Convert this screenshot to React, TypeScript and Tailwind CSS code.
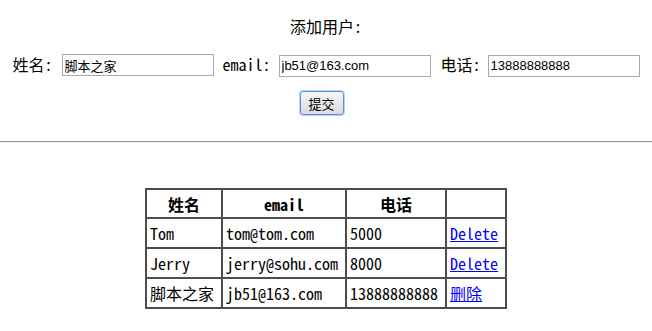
const cjk = "font-['SimSun','Noto_Sans_Mono_CJK_SC','Noto_Sans_CJK_SC',monospace]";

const rows = [
  { name: 'Tom', email: 'tom@tom.com', phone: '5000', action: 'Delete' },
  { name: 'Jerry', email: 'jerry@sohu.com', phone: '8000', action: 'Delete' },
  { name: '脚本之家', email: 'jb51@163.com', phone: '13888888888', action: '删除' },
];

function Field({ value }: { value: string }) {
  return (
    <input
      readOnly
      value={value}
      className="w-[152px] h-[22px] border border-[#a9a9a9] bg-white px-[2px] text-[13px] text-black font-['Liberation_Sans','Noto_Sans_CJK_SC',sans-serif] outline-none"
    />
  );
}

export default function App() {
  return (
    <div className={`min-h-[331px] bg-white text-black text-[16px] ${cjk}`}>
      <div className="pt-[14px] text-center">
        {/* form */}
        <p className="h-[24px] leading-[24px]">添加用户:</p>
        <div className="mt-[15px] flex items-center justify-center h-[22px]">
          <span className="w-[48px] text-left">姓名:</span>
          <span className="ml-[1px]"><Field value="脚本之家" /></span>
          <span className="ml-[9px] w-[48px] text-left">email:</span>
          <span className="ml-[8px]"><Field value="jb51@163.com" /></span>
          <span className="ml-[10px] w-[40px] text-left">电话:</span>
          <span className="ml-[7px]"><Field value="13888888888" /></span>
        </div>
        <div className="mt-[16px] flex justify-center">
          <button className="mr-[9px] w-[44px] h-[24px] rounded-[3px] border border-[#5b8fd6] bg-gradient-to-b from-[#f6f6f6] to-[#dcdcdc] text-[13px] leading-none shadow-[0_0_0_1px_#b9d4f5]">
            提交
          </button>
        </div>
      </div>

      <div className="mt-[26px] h-[2px] border-t border-t-[#9a9a9a] border-b border-b-[#eeeeee]" />

      {/* user list */}
      <div className="mt-[45px] flex justify-center">
        <table className="border-collapse border-2 border-[#4d4d4d] w-[361px] table-fixed">
          <colgroup>
            <col className="w-[76px]" />
            <col className="w-[124px]" />
            <col className="w-[100px]" />
            <col className="w-[60px]" />
          </colgroup>
          <thead>
            <tr className="h-[29px]">
              <th className="border-2 border-[#4d4d4d] font-bold">姓名</th>
              <th className="border-2 border-[#4d4d4d] font-bold">email</th>
              <th className="border-2 border-[#4d4d4d] font-bold">电话</th>
              <th className="border-2 border-[#4d4d4d]"></th>
            </tr>
          </thead>
          <tbody>
            {rows.map((r, i) => (
              <tr key={i} className="h-[30px]">
                <td className="border-2 border-[#4d4d4d] pl-[3px] whitespace-nowrap">{r.name}</td>
                <td className="border-2 border-[#4d4d4d] pl-[3px] whitespace-nowrap">{r.email}</td>
                <td className="border-2 border-[#4d4d4d] pl-[3px] whitespace-nowrap">{r.phone}</td>
                <td className="border-2 border-[#4d4d4d] pl-[3px] whitespace-nowrap">
                  <a href="#" className="text-[#0000ff] underline">{r.action}</a>
                </td>
              </tr>
            ))}
          </tbody>
        </table>
      </div>
    </div>
  );
}
